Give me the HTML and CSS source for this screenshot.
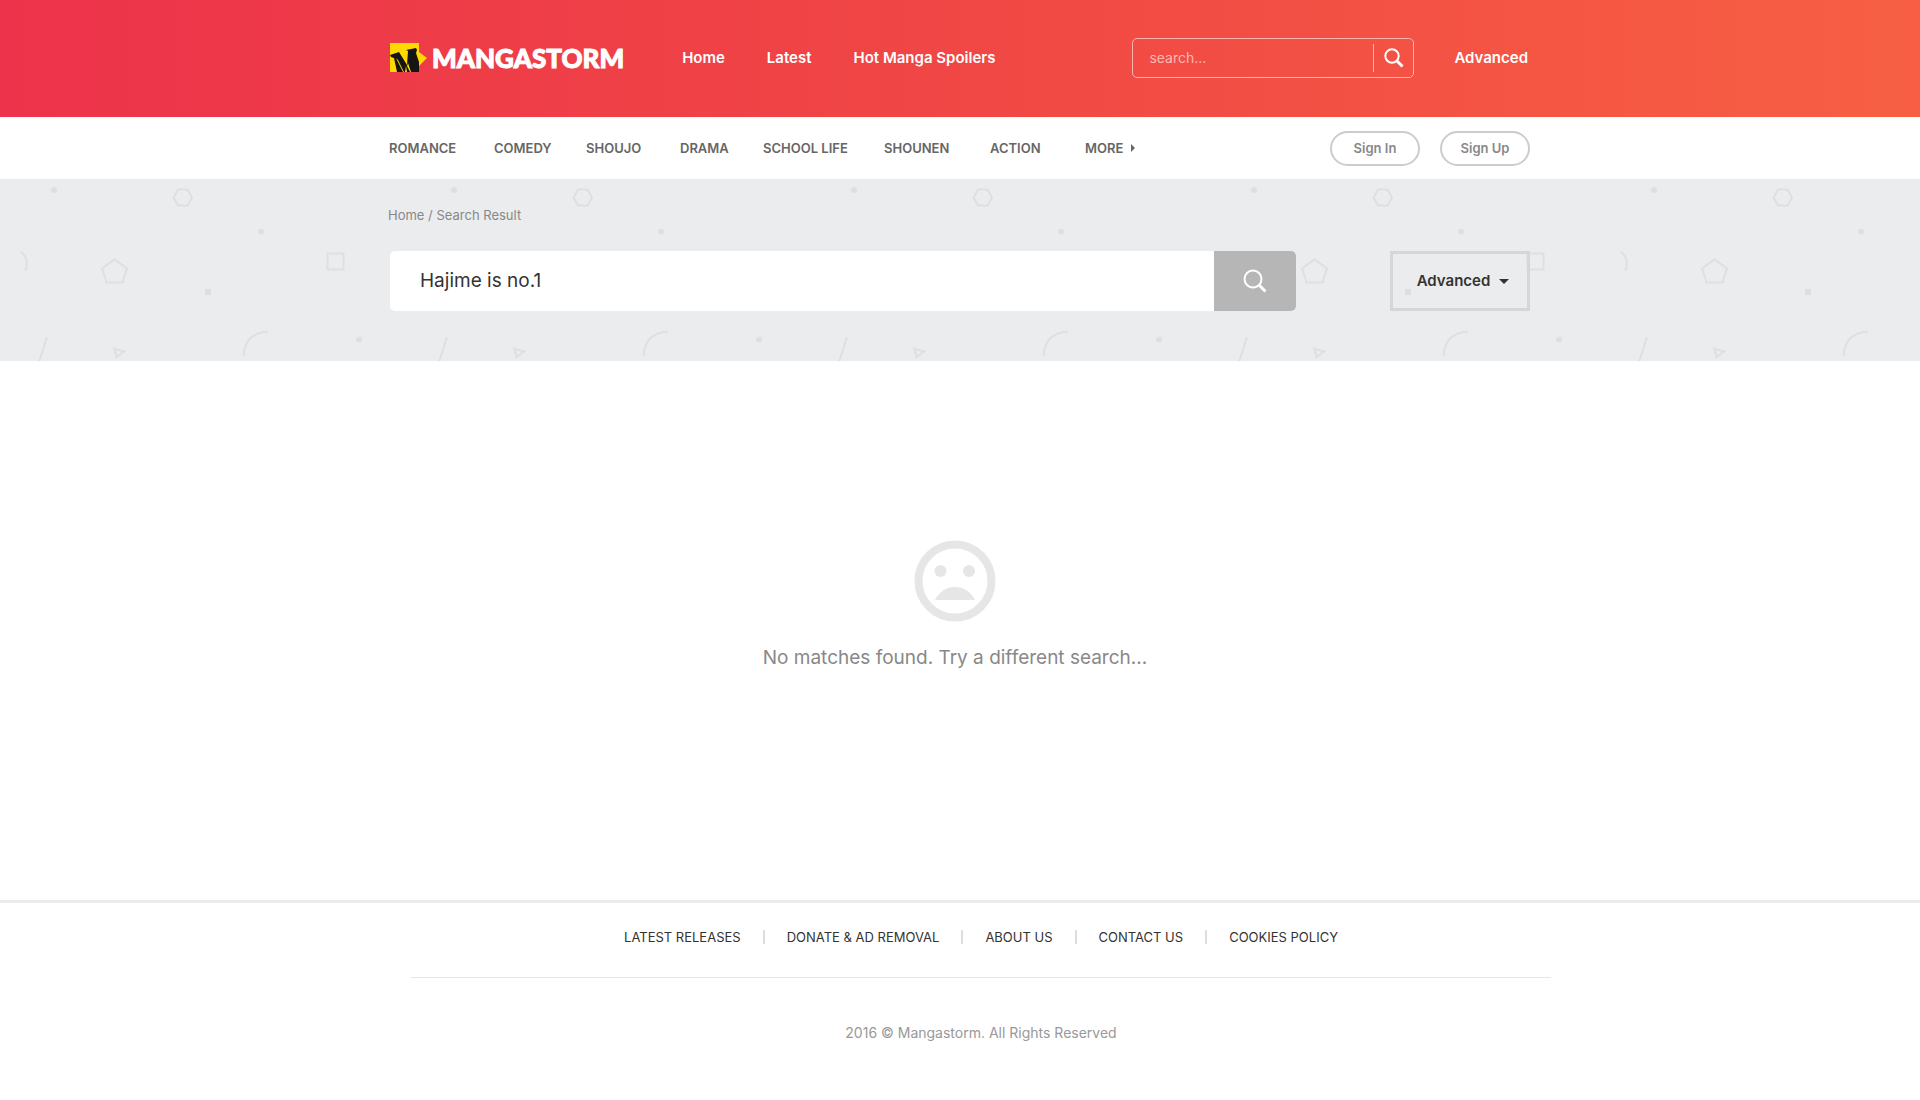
FILE: index.html
```html
<!DOCTYPE html>
<html lang="en">
<head>
<meta charset="utf-8">
<meta name="viewport" content="width=device-width, initial-scale=1">
<title>Search Result - Mangastorm</title>
<link rel="stylesheet" href="styles.css">
</head>
<body>
<header class="masthead">
  <div class="container masthead-row">
    <a class="logo" href="#">
      <svg class="logo-mark" viewBox="0 0 37 30" aria-hidden="true">
        <path fill="#ffd800" d="M0 0h29v9l8 6-8 8v6H0z"/>
        <path fill="#151515" d="M0 12l9-3 8 13 1-14-2-1 10-2 1 2-1 3 3 9v10H17l-1-6-1 6H7L4 15l-3-1z"/>
        <path fill="#ffd800" d="M0 16l1-1 5 14H3L0 21zM6 15l2 2 6 12h-1zM18 20l3 9h-1l-3-6z"/>
      </svg>
      <span class="logo-text">MANGASTORM</span>
    </a>
    <nav class="main-nav" aria-label="Main">
      <a href="#">Home</a>
      <a href="#">Latest</a>
      <a href="#">Hot Manga Spoilers</a>
    </nav>
    <form class="quick-search" role="search">
      <input type="text" placeholder="search..." aria-label="Search manga">
      <button type="button" aria-label="Search">
        <svg width="20" height="20" viewBox="0 0 20 20" fill="none" stroke="currentColor" stroke-width="2" aria-hidden="true"><circle cx="8" cy="8" r="6.7"/><path stroke-width="3" d="m13 13 5.500 5.500"/></svg>
      </button>
    </form>
    <a class="advanced-link" href="#">Advanced</a>
  </div>
</header>

<div class="subnav">
  <div class="container subnav-row">
    <nav class="genres" aria-label="Genres">
      <a href="#">ROMANCE</a>
      <a href="#">COMEDY</a>
      <a href="#">SHOUJO</a>
      <a href="#">DRAMA</a>
      <a href="#">SCHOOL LIFE</a>
      <a href="#">SHOUNEN</a>
      <a href="#">ACTION</a>
      <a class="more" href="#">MORE <svg width="4" height="8" viewBox="0 0 4 8" aria-hidden="true"><path fill="currentColor" d="M0 0l4 4-4 4z"/></svg></a>
    </nav>
    <div class="account">
      <button type="button">Sign In</button>
      <button type="button">Sign Up</button>
    </div>
  </div>
</div>

<section class="hero">
  <svg class="hero-pattern" aria-hidden="true">
    <defs>
      <pattern id="shapes" width="400" height="182" patternUnits="userSpaceOnUse">
        <g fill="#dedfe1">
          <circle cx="54" cy="11" r="3"/>
          <circle cx="261" cy="52.500" r="3"/>
          <circle cx="359" cy="160.500" r="3"/>
          <path d="M205 110h6v6h-6z"/>
        </g>
        <g fill="none" stroke="#dedfe1" stroke-width="2">
          <path d="M173.500 18.500l4.500-8h9.500l4.500 8-4.500 8H178z"/>
          <path d="M114.500 80.500l12.500 9-4.500 14h-16l-4.500-14z"/>
          <path d="M327.500 74.500h16v16h-16z"/>
          <path d="M20.500 73q9 5 5 19"/>
          <path d="M47 158l-8 25"/>
          <path d="M114 169.500l10 3-7.500 5.500z"/>
          <path d="M243.500 177q1-23 24.500-24.500"/>
        </g>
      </pattern>
    </defs>
    <rect width="100%" height="100%" fill="url(#shapes)"/>
  </svg>
  <div class="container hero-body">
    <nav class="breadcrumb" aria-label="Breadcrumb"><a href="#">Home</a> / <span>Search Result</span></nav>
    <div class="hero-row">
      <form class="search" role="search">
        <input type="text" value="Hajime is no.1" aria-label="Search">
        <button type="button" aria-label="Search">
          <svg width="24" height="24" viewBox="0 0 24 24" fill="none" stroke="currentColor" stroke-width="2" aria-hidden="true"><circle cx="10" cy="10" r="8.500"/><path stroke-width="3" d="m16 16 6.500 6.500"/></svg>
        </button>
      </form>
      <button class="advanced-toggle" type="button" aria-expanded="false">Advanced
        <svg width="10" height="5" viewBox="0 0 10 5" aria-hidden="true"><path fill="currentColor" d="M0 0h10L5 5z"/></svg>
      </button>
    </div>
  </div>
</section>

<main class="empty">
  <svg width="82" height="82" viewBox="0 0 82 82" fill="#e6e6e6" aria-hidden="true">
    <circle cx="41" cy="41" r="36.500" fill="none" stroke="#e6e6e6" stroke-width="8"/>
    <circle cx="26.500" cy="31" r="6"/>
    <circle cx="55" cy="31" r="6"/>
    <path d="M21 60c8-17.500 32-17.500 40 0z"/>
  </svg>
  <p>No matches found. Try a different search...</p>
</main>

<footer class="footer">
  <div class="footer-inner">
    <ul class="footer-links">
      <li><a href="#">LATEST RELEASES</a></li>
      <li><a href="#">DONATE &amp; AD REMOVAL</a></li>
      <li><a href="#">ABOUT US</a></li>
      <li><a href="#">CONTACT US</a></li>
      <li><a href="#">COOKIES POLICY</a></li>
    </ul>
    <p class="copyright">2016 © Mangastorm. All Rights Reserved</p>
  </div>
</footer>
</body>
</html>
```

FILE: styles.css
```css
* {
  box-sizing: border-box;
}

body {
  margin: 0;
  background: #fff;
  color: #333;
  font-family: Inter, "Open Sans", sans-serif;
  font-size: 14px;
  line-height: 20px;
}

a {
  color: inherit;
  text-decoration: none;
}

button,
input {
  font: inherit;
  color: inherit;
}

button {
  cursor: pointer;
}

.container {
  width: 100%;
  max-width: 1140px;
  margin: 0 auto;
}

/* Header */
.masthead {
  background: linear-gradient(90deg, #ed334b, #f04545 46%, #f75f43);
  color: #fff;
}

.masthead-row {
  display: flex;
  align-items: center;
  min-height: 117px;
  padding: 0 2px 2px 0;
  font-size: 15px;
  font-weight: 600;
}

.logo {
  display: flex;
  align-items: center;
  gap: 5px;
}

.logo-mark {
  width: 37px;
  height: 30px;
}

.logo-text {
  font-family: Lato, sans-serif;
  font-weight: 900;
  font-size: 26px;
  line-height: 30px;
  -webkit-text-stroke: 1px #fff;
}

.main-nav {
  display: flex;
  gap: 42px;
  margin-left: 58px;
}

.quick-search {
  display: flex;
  align-items: center;
  width: 282px;
  height: 40px;
  margin-left: auto;
  border: 1px solid #fbb5ad;
  border-radius: 5px;
}

.quick-search input {
  flex: 1;
  min-width: 0;
  padding: 0 16px;
  border: 0;
  background: none;
  font-size: 14px;
  font-weight: 400;
}

.quick-search input::placeholder {
  color: #fbb9b2;
  opacity: 1;
}

.quick-search button {
  display: flex;
  align-items: center;
  justify-content: center;
  width: 40px;
  height: 28px;
  padding: 0;
  border: 0;
  border-left: 1px solid #fbb5ad;
  background: none;
}

.advanced-link {
  margin-left: 40px;
}

/* Genre bar */
.subnav-row {
  display: flex;
  align-items: center;
  justify-content: space-between;
  min-height: 62px;
}

.genres {
  display: grid;
  grid-template-columns: 105px 92px 94px 83px 121px 106px 95px auto;
  margin-left: -1px;
  color: #666;
  font-size: 13px;
  font-weight: 600;
}

.more {
  display: flex;
  align-items: center;
  gap: 8px;
}

.account {
  display: flex;
  gap: 20px;
}

.account button {
  width: 90px;
  height: 35px;
  padding: 0;
  border: 2px solid #ccc;
  border-radius: 18px;
  background: none;
  color: #888;
  font-size: 13px;
  font-weight: 600;
}

/* Search band */
.hero {
  position: relative;
  background: #ebecee;
}

.hero-pattern {
  position: absolute;
  inset: 0;
  width: 100%;
  height: 100%;
}

.hero-body {
  position: relative;
  padding: 26px 0 50px;
}

.breadcrumb {
  margin-left: -2px;
  color: #888;
  font-size: 13px;
}

.hero-row {
  display: flex;
  justify-content: space-between;
  margin-top: 26px;
}

.search {
  display: flex;
  flex: 0 1 906px;
  height: 60px;
  border-radius: 5px;
  overflow: hidden;
  background: #fff;
}

.search input {
  flex: 1;
  min-width: 0;
  padding: 0 30px;
  border: 0;
  background: none;
  font-size: 19px;
}

.search button {
  display: flex;
  align-items: center;
  justify-content: center;
  width: 82px;
  padding: 0;
  border: 0;
  background: #b6b6b6;
  color: #fff;
}

.advanced-toggle {
  display: flex;
  align-items: center;
  justify-content: center;
  gap: 9px;
  width: 140px;
  height: 60px;
  padding: 0 0 0 6px;
  border: 3px solid #d6d6d6;
  background: none;
  font-size: 15px;
  font-weight: 600;
}

/* Empty state */
.empty {
  display: flex;
  flex-direction: column;
  align-items: center;
  gap: 24px;
  min-height: 539px;
  padding: 179px 10px 0 0;
}

.empty p {
  margin: 0;
  color: #888;
  font-size: 19px;
  line-height: 24px;
}

/* Footer */
.footer {
  padding-left: 42px;
  border-top: 3px solid #ebebeb;
}

.footer-inner {
  max-width: 1140px;
  margin: 0 auto;
}

.footer-links {
  display: flex;
  justify-content: center;
  margin: 0;
  padding: 24px 0 30px;
  border-bottom: 1px solid #e6e6e6;
  font-size: 13px;
  list-style: none;
}

.footer-links li {
  display: flex;
  align-items: center;
}

.footer-links li + li::before {
  content: "";
  width: 2px;
  height: 14px;
  margin: 0 22px;
  background: #ddd;
}

.copyright {
  margin: 0;
  padding: 45px 0 56px;
  color: #999;
  text-align: center;
}
```
